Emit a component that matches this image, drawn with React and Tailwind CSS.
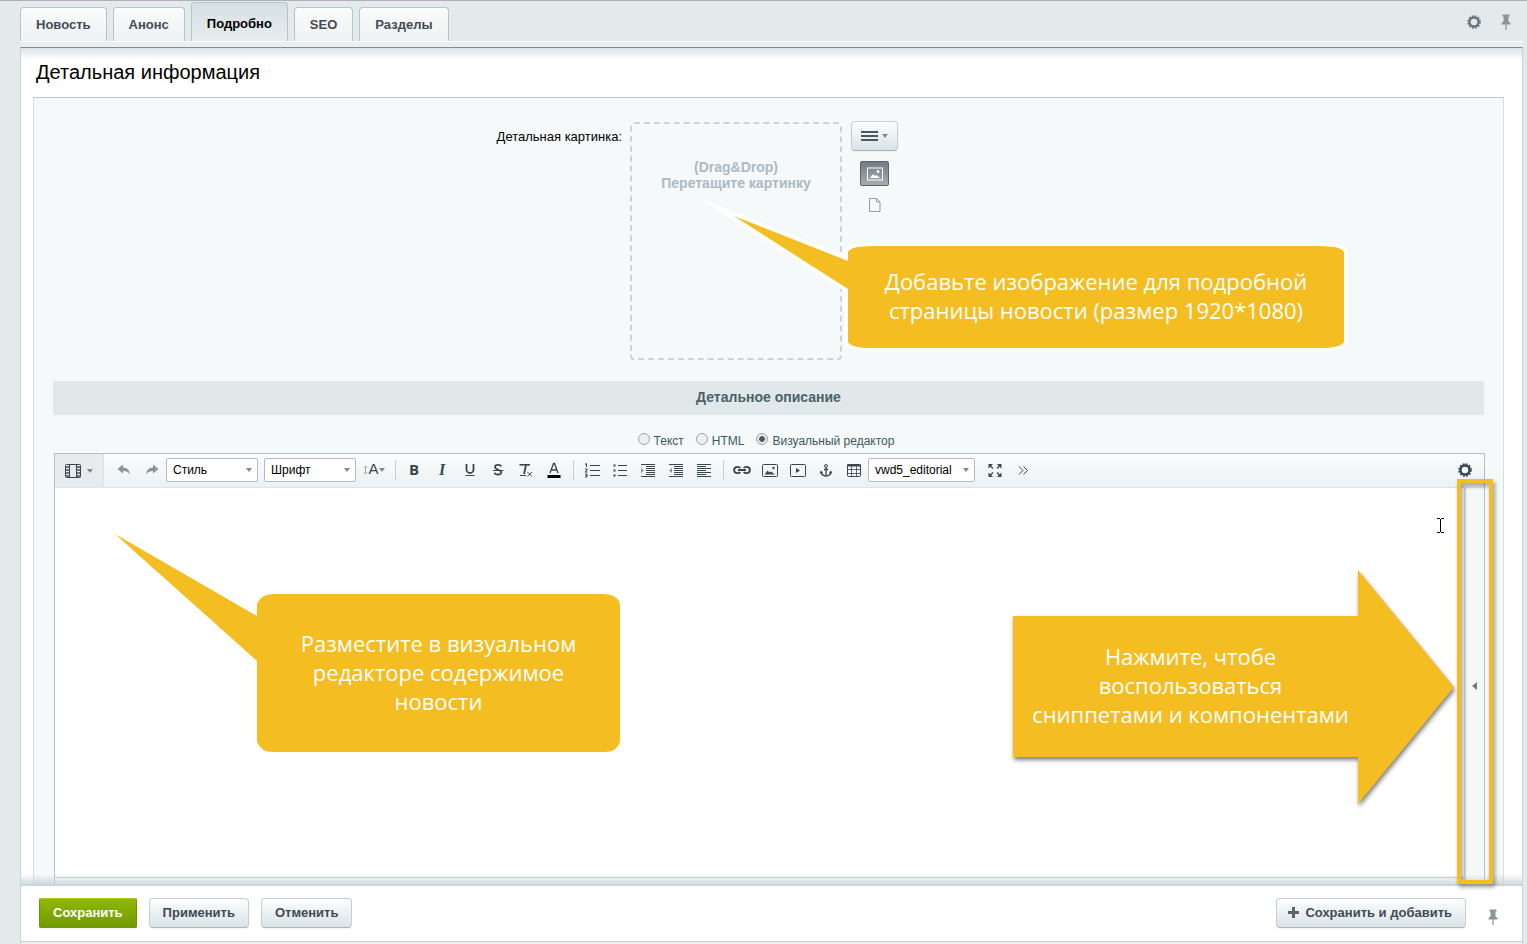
import React, { useState } from "react";

const TABS = ["Новость", "Анонс", "Подробно", "SEO", "Разделы"];

const EDITOR_MODES = [
  { id: "text", label: "Текст" },
  { id: "html", label: "HTML" },
  { id: "visual", label: "Визуальный редактор" },
];

function Icon({ size = 16, children, className = "" }) {
  return (
    <svg
      width={size}
      height={size}
      viewBox="0 0 16 16"
      fill="none"
      stroke="currentColor"
      className={className}
      aria-hidden="true"
    >
      {children}
    </svg>
  );
}

function Caret({ className = "" }) {
  return (
    <svg width="6" height="4" viewBox="0 0 6 4" className={className} aria-hidden="true">
      <path d="M0 0h6L3 4z" fill="#7d8b92" />
    </svg>
  );
}

function GearIcon() {
  return (
    <Icon>
      <circle cx="8" cy="8" r="4.5" strokeWidth="2.4" />
      <circle cx="8" cy="8" r="6" strokeWidth="1.6" strokeDasharray="1.9 1.24" />
    </Icon>
  );
}

function PinIcon() {
  return (
    <Icon>
      <path
        d="M4.5 0.5h7v2h-1v5l2 1.5v1.5h-9V9l2-1.5v-5h-1z"
        fill="currentColor"
        stroke="none"
      />
      <path d="M8 10v6" strokeWidth="1.2" />
    </Icon>
  );
}

function ToolButton({ label, children, className = "text-[#37474f]" }) {
  return (
    <button
      type="button"
      title={label}
      aria-label={label}
      className={`flex h-7 w-7 shrink-0 items-center justify-center hover:bg-[#e3e9eb] ${className}`}
    >
      {children}
    </button>
  );
}

function Separator() {
  return <div className="mr-1 ml-[5px] h-5 w-px shrink-0 bg-[#c9d0d3]" />;
}

function ToolSelect({ label, options, width }) {
  return (
    <div className={`relative shrink-0 ${width}`}>
      <select
        aria-label={label}
        className="h-6 w-full appearance-none rounded-xs border border-[#b3bbbf] bg-white pl-1.5 text-xs text-black"
      >
        {options.map((o) => (
          <option key={o}>{o}</option>
        ))}
      </select>
      <Caret className="pointer-events-none absolute top-2.5 right-1.5" />
    </div>
  );
}

function GrayButton({ children }) {
  return (
    <button
      type="button"
      className="flex h-[30px] items-center gap-1.5 rounded-sm border border-[#c5ced2] border-b-[#a9b4b9] bg-linear-to-b from-[#fdfefe] to-[#d9e3e7] px-[13px] text-[13px] font-bold text-[#3f4b54] shadow-xs"
    >
      {children}
    </button>
  );
}

function Toolbar() {
  return (
    <div className="flex h-[34px] shrink-0 items-center border-b border-[#dde4e6] bg-linear-to-b from-[#fbfdfd] to-[#ebf1f3] pb-0.5">
      <button
        type="button"
        aria-label="Вид редактора"
        className="mr-1.5 -mb-0.5 flex shrink-0 items-center justify-center gap-1.5 self-stretch border-r border-[#dbe1e4] bg-[#e7ebee] w-[49px] text-[#37474f]"
      >
        <Icon>
          <rect x="0.5" y="1.5" width="15" height="13" rx="1" />
          <path d="M4.5 1.5v13M11.5 1.5v13" />
          <path d="M2.5 3v11M13.5 3v11" strokeWidth="3" strokeDasharray="2 1" opacity="0.7" />
        </Icon>
        <Caret />
      </button>

      <ToolButton label="Отменить действие" className="text-[#8a969c]">
        <Icon>
          <path d="M1.5 7L7 2.5v3c4 .2 6.5 2.5 7 7C12.3 9.8 10 9 7 9v2.5z" fill="currentColor" stroke="none" />
        </Icon>
      </ToolButton>
      <ToolButton label="Повторить действие" className="text-[#8a969c]">
        <Icon>
          <path d="M14.5 7L9 2.5v3c-4 .2-6.5 2.5-7 7C3.7 9.8 6 9 9 9v2.5z" fill="currentColor" stroke="none" />
        </Icon>
      </ToolButton>
      <div className="mr-1 flex gap-1.5">
        <ToolSelect label="Стиль" options={["Стиль"]} width="w-[92px]" />
        <ToolSelect label="Шрифт" options={["Шрифт"]} width="w-[92px]" />
      </div>
      <button
        type="button"
        aria-label="Размер шрифта"
        className="mr-0.5 flex h-7 w-7 shrink-0 items-center justify-center text-[#37474f]"
      >
        <svg width="5" height="10" viewBox="0 0 5 10" stroke="#9ba6ab" fill="none" aria-hidden="true">
          <path d="M2.5 1v8M1 2.5L2.5 1 4 2.5M1 7.5L2.5 9 4 7.5" />
        </svg>
        <span className="text-[15px]">A</span>
        <Caret />
      </button>
      <Separator />

      <ToolButton label="Жирный">
        <span className="font-['Open_Sans',sans-serif] text-[15px] font-bold">B</span>
      </ToolButton>
      <ToolButton label="Курсив">
        <span className="font-['Liberation_Serif',serif] text-base font-bold italic">I</span>
      </ToolButton>
      <ToolButton label="Подчеркнутый">
        <Icon>
          <path d="M4.5 2v5.5a3.5 3.5 0 0 0 7 0V2" strokeWidth="1.8" />
          <path d="M3.5 13.5h9" />
        </Icon>
      </ToolButton>
      <ToolButton label="Зачеркнутый">
        <Icon>
          <path d="M11.3 4.5C10.5 2.2 5 2.2 5 5c0 3.2 6.3 2.2 6.3 5.3 0 3-6 3-6.8.5" strokeWidth="1.7" />
          <path d="M3 8.5h10.5" />
        </Icon>
      </ToolButton>
      <ToolButton label="Очистить форматирование">
        <Icon>
          <path d="M1.5 2.8H12" strokeWidth="1.6" />
          <path d="M8 3L6 12" strokeWidth="1.8" />
          <path d="M2 13.5h6M9.5 10l4.5 4.5M14 10l-4.5 4.5" />
        </Icon>
      </ToolButton>
      <ToolButton label="Цвет текста">
        <Icon>
          <path d="M4 11L7.5 1.5h1L12 11M5.2 8h5.600" strokeWidth="1.3" />
          <path d="M1.5 14.5h13" stroke="#000" strokeWidth="3" />
        </Icon>
      </ToolButton>
      <Separator />

      <ToolButton label="Нумерованный список">
        <Icon>
          <path d="M6 3.5h10M6 8.5h10M6 13.5h10" />
          <path d="M1 2.5L2.5 1.5V5M1 7h2v1.5L1 10h2.5M1 12h2v3H1M1.5 13.5H3" />
        </Icon>
      </ToolButton>
      <ToolButton label="Маркированный список">
        <Icon>
          <path d="M6 3.5h9M6 8.5h9M6 13.5h9" />
          <path d="M1.5 3.5h2M1.5 8.5h2M1.5 13.5h2" strokeWidth="2" />
        </Icon>
      </ToolButton>
      <ToolButton label="Увеличить отступ">
        <Icon>
          <path d="M1 2.5h14M6 4.5h9M6 6.5h9M6 8.5h9M6 10.5h9M6 12.5h9M1 14.5h14" />
          <path d="M1 6v5l3-2.5z" fill="#8a969c" stroke="none" />
        </Icon>
      </ToolButton>
      <ToolButton label="Уменьшить отступ">
        <Icon>
          <path d="M1 2.5h14M6 4.5h9M6 6.5h9M6 8.5h9M6 10.5h9M6 12.5h9M1 14.5h14" />
          <path d="M4 6v5L1 8.5z" fill="#8a969c" stroke="none" />
        </Icon>
      </ToolButton>
      <ToolButton label="Выравнивание">
        <Icon>
          <path d="M1 2.5h14M1 4.5h9M1 6.5h14M1 8.5h9M1 10.5h14M1 12.5h9M1 14.5h14" />
        </Icon>
      </ToolButton>
      <Separator />

      <ToolButton label="Ссылка">
        <Icon size={18}>
          <path d="M6.5 6.2C6 5.5 5.2 5.2 4.2 5.2 2.5 5.2 1 6.300 1 8s1.5 2.8 3.2 2.8c1 0 1.8-.3 2.3-1M9.5 6.2c.5-.7 1.3-1 2.3-1C13.5 5.2 15 6.3 15 8s-1.5 2.8-3.2 2.8c-1 0-1.8-.3-2.3-1M4.5 8h7" strokeWidth="1.7" />
        </Icon>
      </ToolButton>
      <ToolButton label="Изображение">
        <Icon>
          <rect x="0.5" y="2.5" width="15" height="12" rx="1" />
          <path d="M2.5 12.5l3-4 2 2 1.5-1 4 3z" fill="currentColor" stroke="none" />
          <circle cx="11.5" cy="6" r="1.2" fill="currentColor" stroke="none" />
        </Icon>
      </ToolButton>
      <ToolButton label="Видео">
        <Icon>
          <rect x="0.5" y="2.5" width="15" height="12" rx="1" />
          <path d="M6 6v5l4-2.5z" fill="currentColor" stroke="none" />
        </Icon>
      </ToolButton>
      <ToolButton label="Якорь">
        <Icon>
          <circle cx="8" cy="4" r="1.5" />
          <path d="M8 5.5v8.5M6 7.5h4" strokeWidth="1.3" />
          <path d="M3 9.5c.3 3 2.2 4.300 5 4.500 2.800-.2 4.700-1.500 5-4.500" strokeWidth="1.5" />
          <path d="M1.8 11.5L3 8.500l2 2.500zM14.200 11.500L13 8.500 11 11z" fill="currentColor" stroke="none" />
        </Icon>
      </ToolButton>
      <ToolButton label="Таблица">
        <Icon>
          <rect x="1.5" y="2.5" width="13" height="12" rx="1" />
          <path d="M1 3.5h14" strokeWidth="2" />
          <path d="M1.5 7.5h13M1.5 11.5h13M5.5 4v10.5M10.5 4v10.5" strokeWidth="0.8" />
        </Icon>
      </ToolButton>
      <div className="mr-1.5">
        <ToolSelect label="Шаблон" options={["vwd5_editorial"]} width="w-[107px]" />
      </div>
      <ToolButton label="На весь экран">
        <Icon>
          <path d="M6 6.5L3 3.5M10 6.5l3-3M6 10.5l-3 3M10 10.5l3 3" strokeWidth="1.3" />
          <path d="M1.5 6.5V2h4.500zM14.500 6.5V2H10zM1.500 10.500V15h4.500zM14.500 10.500V15H10z" fill="currentColor" stroke="none" />
        </Icon>
      </ToolButton>
      <ToolButton label="Ещё">
        <Icon>
          <path d="M4 4.5l4 4-4 4M8.5 4.5l4 4-4 4" />
        </Icon>
      </ToolButton>
      <div className="mr-[5px] ml-auto">
        <ToolButton label="Настройки редактора">
          <GearIcon />
        </ToolButton>
      </div>
    </div>
  );
}

function CalloutText({ children, className = "" }) {
  return (
    <p
      className={`absolute flex items-center justify-center pb-0.5 text-center font-['Open_Sans',sans-serif] text-[22px] leading-[29px] text-white ${className}`}
    >
      <span>{children}</span>
    </p>
  );
}

export default function App() {
  const [tab, setTab] = useState("Подробно");
  const [mode, setMode] = useState("visual");

  return (
    <div className="flex min-h-screen flex-col border-t border-[#b5adb5] bg-[#e2eaec] pr-1 pl-5 font-['Liberation_Sans',Arial,sans-serif] text-[13px] text-black">
      <header className="flex items-end border-b border-white pt-px">
        <nav className="flex items-end gap-1.5">
          {TABS.map((name) => (
            <button
              key={name}
              type="button"
              onClick={() => setTab(name)}
              className={
                name === tab
                  ? "h-[39px] rounded-t-sm border border-b-0 border-[#b7c3c7] bg-linear-to-b from-[#d6dfe2] to-[#e6edef] px-[15px] pt-1 font-bold text-black"
                  : "h-[34px] rounded-t-sm border border-b-0 border-[#b9c4c9] bg-linear-to-b from-[#fbfcfc] to-[#eef1f2] px-[15px] font-bold text-[#414b55]"
              }
            >
              {name}
            </button>
          ))}
        </nav>
        <div className="mr-[9px] mb-[11px] ml-auto flex gap-4">
          <button type="button" aria-label="Настройки" className="text-[#6a767d]">
            <GearIcon />
          </button>
          <button type="button" aria-label="Закрепить" className="text-[#8b959a]">
            <PinIcon />
          </button>
        </div>
      </header>
      <div className="h-[5px] bg-[#e8eff1]" />

      <main className="flex flex-1 flex-col border-x border-t border-x-[#c9d4d8] border-t-[#848d93] bg-white">
        <h1 className="h-[49px] bg-linear-to-b from-[#dce3e6] to-white to-25% pt-2.5 pl-[15px] text-xl">
          Детальная информация
        </h1>

        <div className="relative mr-[18px] ml-3 flex flex-1 flex-col border-x border-t border-x-[#d5dde0] border-t-[#bfcbd0] bg-[#f5f9fa] px-[19px] pt-6">
          <section className="flex pl-px">
            <div className="w-[40%] shrink-0 pt-[5px] pr-1 text-right">
              <label htmlFor="picture">Детальная картинка:</label>
            </div>
            <div className="relative z-20 ml-1 h-[238px] w-[212px] shrink-0 rounded-sm border-2 border-dashed border-[#d0d3d5] pt-[35px] text-center text-sm leading-4 font-bold text-[#adbac3]">
              <input id="picture" type="file" className="sr-only" />
              (Drag&amp;Drop)
              <br />
              Перетащите картинку
              <svg
                width="650"
                height="160"
                viewBox="0 0 650 160"
                className="pointer-events-none absolute top-[77px] left-[73px]"
                aria-hidden="true"
              >
                <path
                  d="M29 15L143 60V51Q146 45 168 45H614Q636 45 639 51V141Q636 147 614 147H168Q146 147 143 141V88Z"
                  fill="#f4bd22"
                  stroke="#fff"
                  strokeWidth="8"
                  strokeMiterlimit="20"
                  paintOrder="stroke"
                />
              </svg>
              <CalloutText className="top-[122px] left-[216px] h-[102px] w-[496px] font-normal">
                Добавьте изображение для подробной
                <br />
                страницы новости (размер 1920*1080)
              </CalloutText>
            </div>
            <div className="-mt-px ml-[9px] flex flex-col items-center">
              <button
                type="button"
                aria-label="Меню"
                className="flex h-[30px] w-[47px] items-center justify-center gap-1 rounded-sm border border-[#c5ced2] border-b-[#a9b4b9] bg-linear-to-b from-[#fdfefe] to-[#d9e3e7] text-[#485863] shadow-xs"
              >
                <svg width="17" height="12" viewBox="0 0 17 12" aria-hidden="true">
                  <path d="M0 2h17M0 6h17M0 10h17" stroke="currentColor" strokeWidth="2" />
                </svg>
                <Caret />
              </button>
              <button
                type="button"
                aria-label="Вид: картинка"
                className="mt-2.5 flex h-[25px] w-[29px] items-center justify-center rounded-xs border border-[#59646b] bg-linear-to-b from-[#727d83] to-[#a3adb2] text-white"
              >
                <Icon>
                  <rect x="0.5" y="2" width="15" height="12" />
                  <path d="M3 12l3-4 2 2 1.5-1L13 12z" fill="currentColor" stroke="none" />
                  <circle cx="11" cy="5.5" r="1.5" fill="currentColor" stroke="none" />
                </Icon>
              </button>
              <button type="button" aria-label="Вид: файл" className="mt-[11px] text-[#929da3]">
                <Icon>
                  <path d="M2.5 1.5h7l3.500 3.500v9.500H2.500zM9.500 1.500V5H13" />
                </Icon>
              </button>
            </div>
          </section>

          <h2 className="mt-[21px] flex h-[34px] shrink-0 items-center justify-center bg-[#e0e8ea] pb-0.5 text-sm font-bold text-[#4b6267]">
            Детальное описание
          </h2>

          <div className="flex h-[38px] items-end justify-center gap-3 pr-[5px] pb-1 text-xs text-[#3f5761]">
            {EDITOR_MODES.map((m) => (
              <label key={m.id} className="flex items-center gap-1">
                <input
                  type="radio"
                  name="mode"
                  checked={mode === m.id}
                  onChange={() => setMode(m.id)}
                  className="mb-1 h-3 w-3 appearance-none rounded-full border border-[#a0a5a8] bg-[#eceeef] checked:bg-[radial-gradient(#555_35%,#e8e8e8_45%)]"
                />
                {m.label}
              </label>
            ))}
          </div>

          <div className="-mr-px ml-px flex flex-1 flex-col border-x border-t border-[#b3bfc6] bg-white">
            <Toolbar />
            <div className="relative flex flex-1">
              <div className="flex flex-1 flex-col pb-2">
                <textarea
                  aria-label="Детальное описание"
                  className="w-full flex-1 resize-none border-b border-[#c3cbcf] bg-white p-3 outline-none"
                />
              </div>
              <svg width="9" height="17" viewBox="0 0 9 17" className="absolute top-[29px] right-[39px]" aria-hidden="true">
                <path d="M1 1.5h3M5 1.5h3M4.5 2v13M1 15.5h3M5 15.5h3" stroke="#000" fill="none" />
              </svg>

              <div className="absolute top-[44px] left-[58px]">
                <svg width="510" height="222" viewBox="0 0 510 222" aria-hidden="true">
                  <path
                    d="M2 2L144 84V72Q148 62 160 62H491Q504 62 507 72V210Q504 220 491 220H160Q148 220 144 210V129Z"
                    fill="#f4bd22"
                  />
                </svg>
                <CalloutText className="top-[62px] left-[144px] h-[158px] w-[363px]">
                  Разместите в визуальном
                  <br />
                  редакторе содержимое
                  <br />
                  новости
                </CalloutText>
              </div>

              <div className="absolute top-[80px] right-[25px] z-20">
                <svg width="450" height="246" viewBox="0 0 450 246" className="drop-shadow-[1px_3px_2px_rgba(0,0,0,0.5)]" aria-hidden="true">
                  <path d="M4 48H349V2L445 119L349 236V189H4Z" fill="#f4bd22" />
                </svg>
                <CalloutText className="top-[48px] left-[4px] h-[141px] w-[355px]">
                  Нажмите, чтобе
                  <br />
                  воспользоваться
                  <br />
                  сниппетами и компонентами
                </CalloutText>
              </div>

              <aside className="relative flex w-5 shrink-0 items-center justify-center border-l-2 border-[#d0d8dc] bg-[#f5f7f9] pr-0.5 pb-0.5">
                <button type="button" aria-label="Показать панель сниппетов">
                  <svg width="5" height="8" viewBox="0 0 5 8" aria-hidden="true">
                    <path d="M5 0v8L0 4z" fill="#6c777d" />
                  </svg>
                </button>
                <div className="pointer-events-none absolute -top-[9px] -right-[9px] bottom-0.5 -left-[9px] z-20 border-4 border-[#f4bd22] drop-shadow-[2px_3px_2px_rgba(0,0,0,0.4)]" />
              </aside>
            </div>
          </div>
          <div className="pointer-events-none absolute -right-[19px] bottom-0 -left-[13px] z-10 h-3 bg-linear-to-b from-transparent to-[#c9d4d8]" />
        </div>

        <footer className="flex h-14 shrink-0 items-center gap-3 border-b border-[#c9cfd2] pr-[21px] pb-0.5 pl-[18px]">
          <button
            type="button"
            className="h-[30px] rounded-xs border border-[#709800] border-t-[#a3cc0c] bg-linear-to-b from-[#90b800] to-[#719a00] px-[13px] text-[13px] font-bold text-white shadow-xs"
          >
            Сохранить
          </button>
          <GrayButton>Применить</GrayButton>
          <GrayButton>Отменить</GrayButton>
          <div className="ml-auto flex items-center gap-[19px]">
            <GrayButton>
              <svg width="11" height="11" viewBox="0 0 11 11" className="-ml-0.5" aria-hidden="true">
                <path d="M5.5 0v11M0 5.5h11" stroke="#59656c" strokeWidth="3" />
              </svg>
              Сохранить и добавить
            </GrayButton>
            <button type="button" aria-label="Закрепить панель" className="mt-2 text-[#8b959a]">
              <PinIcon />
            </button>
          </div>
        </footer>
        <div className="h-0.5 bg-[#eeefef]" />
      </main>
    </div>
  );
}
